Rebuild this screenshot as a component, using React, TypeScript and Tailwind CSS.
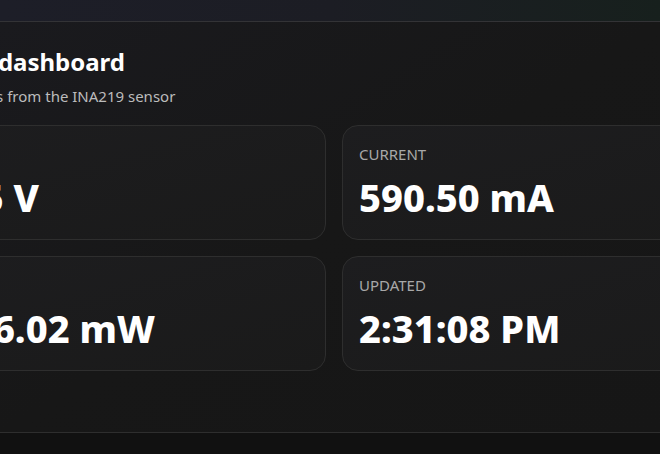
import React from "react";

const cards = [
  { label: "Voltage", value: "5.05 V" },
  { label: "Current", value: "590.50 mA" },
  { label: "Power", value: "2956.02 mW" },
  { label: "Updated", value: "2:31:08 PM" },
];

export default function App() {
  return (
    <div
      className="w-[660px] h-[454px] overflow-hidden bg-[#111111] text-white"
      style={{ fontFamily: '"Noto Sans", "Open Sans", sans-serif' }}
    >
      <div className="h-[22px] border-b border-[#333336] bg-gradient-to-r from-[#1d1e28] via-[#1c1d24] to-[#17201d]" />
      <div className="border-b border-[#2e2e2e] bg-gradient-to-br from-[#1a1a1e] via-[#171717] to-[#161616] pt-6 pb-[61px]">
        <div className="-ml-[90px] w-[848px]">
          <h1 className="-ml-[5px] text-2xl leading-8 font-bold text-white">INA219 dashboard</h1>
          <p className="mt-2 text-[15px] leading-5 text-[#bcbcbc]">Live readings from the INA219 sensor</p>
          <div className="mt-[19px] grid grid-cols-2 gap-4">
            {cards.map((c) => (
              <div
                key={c.label}
                className="rounded-2xl border border-[#2e2e2e] bg-gradient-to-br from-[#1d1d1f] to-[#1a1a1a] px-4 pt-[18px] pb-[23px]"
              >
                <div className="text-[15px] leading-5 uppercase text-[#a8a8a8]">{c.label}</div>
                <div className="mt-[14px] text-[38px] leading-[38px] font-extrabold text-white">{c.value}</div>
              </div>
            ))}
          </div>
        </div>
      </div>
    </div>
  );
}
